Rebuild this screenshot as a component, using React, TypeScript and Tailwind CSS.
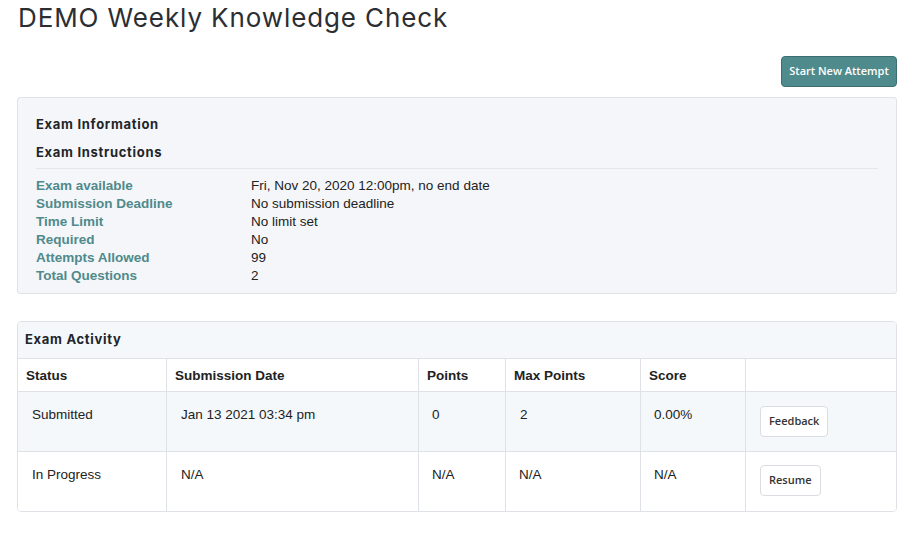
import React from "react";

const infoRows: [string, string][] = [
  ["Exam available", "Fri, Nov 20, 2020 12:00pm, no end date"],
  ["Submission Deadline", "No submission deadline"],
  ["Time Limit", "No limit set"],
  ["Required", "No"],
  ["Attempts Allowed", "99"],
  ["Total Questions", "2"],
];

const cols = "grid grid-cols-[148px_252px_87px_135px_105px_1fr]";

function SmallButton({ label }: { label: string }) {
  return (
    <button className="h-[31px] px-[8px] bg-white border border-[#d9dce0] rounded-[4px] text-[11px] font-semibold text-[#333] font-['Open_Sans',sans-serif]">
      {label}
    </button>
  );
}

export default function App() {
  const heading = "font-['Inter',sans-serif] font-bold text-[13px] tracking-[0.7px] text-[#212529]";
  const cell = "border-l border-[#dee2e6] first:border-l-0";
  return (
    <div className="bg-white min-h-[534px] w-[920px] font-['Liberation_Sans',Arial,sans-serif] text-[#212529]">
      <div className="ml-[17px] w-[880px]">
        <h1 className="pt-[1px] pl-[1px] text-[26px] leading-[34px] font-['Inter',sans-serif] font-normal tracking-[0.9px] text-[#2b2e33]">
          DEMO Weekly Knowledge Check
        </h1>
        <div className="flex justify-end mt-[21px]">
          <button className="h-[31px] w-[116px] bg-[#4f8a8c] border border-[#3d6f71] rounded-[4px] text-white text-[11px] font-semibold font-['Open_Sans',sans-serif]">
            Start New Attempt
          </button>
        </div>

        <div className="mt-[10px] h-[197px] bg-[#f5f6f9] border border-[#dfe2e7] rounded-[3px] pl-[18px] pr-[18px] pt-[17px]">
          <div className={`${heading} leading-[18px]`}>Exam Information</div>
          <div className={`${heading} leading-[18px] mt-[10px]`}>Exam Instructions</div>
          <div className="mt-[7px] border-t border-[#e3e6ea]" />
          <div className="mt-[8px]">
            {infoRows.map(([k, v]) => (
              <div key={k} className="flex text-[13.5px] leading-[18px]">
                <div className="w-[215px] font-bold text-[#4f8a8c]">{k}</div>
                <div className="text-[#222]">{v}</div>
              </div>
            ))}
          </div>
        </div>

        <div className="mt-[27px] border border-[#dee2e6] rounded-[4px] overflow-hidden">
          <div className="h-[36px] bg-[#f4f8fb] flex items-center pl-[7px]">
            <span className={heading}>Exam Activity</span>
          </div>
          <div className={`${cols} h-[33px] border-t border-[#dee2e6] text-[13.5px] font-bold text-[#222]`}>
            {["Status", "Submission Date", "Points", "Max Points", "Score", ""].map((h, i) => (
              <div key={i} className={`${cell} flex items-center pl-[8px] pt-[2px]`}>{h}</div>
            ))}
          </div>
          <div className={`${cols} h-[60px] border-t border-[#dee2e6] bg-[#f4f8fb] text-[13.5px] text-[#222]`}>
            <div className={`${cell} pl-[14px] pt-[14px] leading-[18px]`}>Submitted</div>
            <div className={`${cell} pl-[14px] pt-[14px] leading-[18px]`}>Jan 13 2021 03:34 pm</div>
            <div className={`${cell} pl-[13px] pt-[14px] leading-[18px]`}>0</div>
            <div className={`${cell} pl-[14px] pt-[14px] leading-[18px]`}>2</div>
            <div className={`${cell} pl-[13px] pt-[14px] leading-[18px]`}>0.00%</div>
            <div className={`${cell} pl-[14px] pt-[14px]`}><SmallButton label="Feedback" /></div>
          </div>
          <div className={`${cols} h-[60px] border-t border-[#dee2e6] bg-white text-[13.5px] text-[#222]`}>
            <div className={`${cell} pl-[14px] pt-[14px] leading-[18px]`}>In Progress</div>
            <div className={`${cell} pl-[14px] pt-[14px] leading-[18px]`}>N/A</div>
            <div className={`${cell} pl-[13px] pt-[14px] leading-[18px]`}>N/A</div>
            <div className={`${cell} pl-[13px] pt-[14px] leading-[18px]`}>N/A</div>
            <div className={`${cell} pl-[13px] pt-[14px] leading-[18px]`}>N/A</div>
            <div className={`${cell} pl-[14px] pt-[13px]`}><SmallButton label="Resume" /></div>
          </div>
        </div>
      </div>
    </div>
  );
}
